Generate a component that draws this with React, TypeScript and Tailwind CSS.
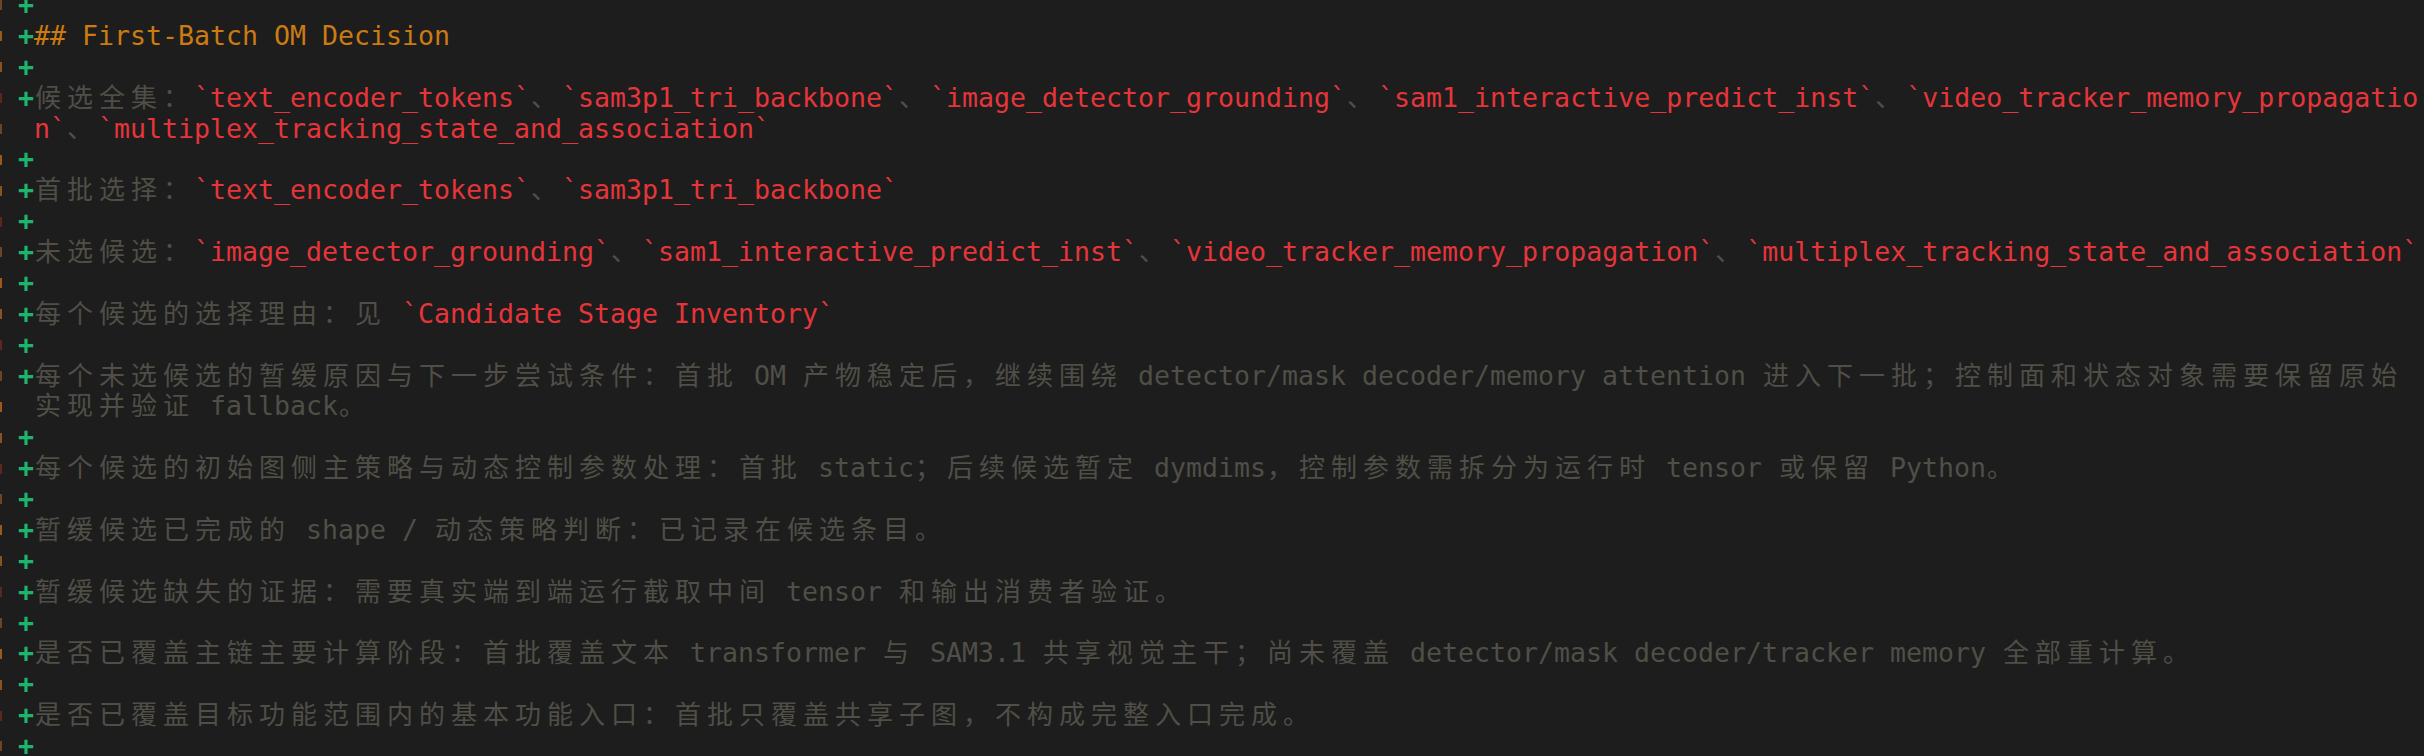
import React from "react";

type Seg = { t: string; c: "g" | "r" | "o" };

const CJK = /[\u2E80-\u9FFF\uFF00-\uFFEF]/;

function Text({ text }: { text: string }) {
  const parts: React.ReactNode[] = [];
  let buf = "";
  let k = 0;
  for (const ch of Array.from(text)) {
    if (CJK.test(ch)) {
      if (buf) {
        parts.push(<span key={k++}>{buf}</span>);
        buf = "";
      }
      parts.push(
        <span
          key={k++}
          className="inline-block w-[32px] pl-[1px] leading-none text-[26px] font-['Noto_Sans_CJK_SC',sans-serif]"
        >
          {ch}
        </span>
      );
    } else {
      buf += ch;
    }
  }
  if (buf) parts.push(<span key={k++}>{buf}</span>);
  return <>{parts}</>;
}

const colorCls: Record<Seg["c"], string> = {
  g: "text-[#4f4f47]",
  r: "text-[#e5353a]",
  o: "text-[#cc7a12]",
};

type Row = { plus: boolean; segs: Seg[]; mark: string };

const g = (t: string): Seg => ({ t, c: "g" });
const r = (t: string): Seg => ({ t, c: "r" });
const o = (t: string): Seg => ({ t, c: "o" });

const marks = ["#6e4422", "#9a5a1c", "#8a521e", "#5e2620"];

const rowsData: { plus: boolean; segs: Seg[] }[] = [
  { plus: true, segs: [] },
  { plus: true, segs: [o("## First-Batch OM Decision")] },
  { plus: true, segs: [] },
  {
    plus: true,
    segs: [
      g("候选全集："),
      r("`text_encoder_tokens`"),
      g("、"),
      r("`sam3p1_tri_backbone`"),
      g("、"),
      r("`image_detector_grounding`"),
      g("、"),
      r("`sam1_interactive_predict_inst`"),
      g("、"),
      r("`video_tracker_memory_propagatio"),
    ],
  },
  {
    plus: false,
    segs: [r("n`"), g("、"), r("`multiplex_tracking_state_and_association`")],
  },
  { plus: true, segs: [] },
  {
    plus: true,
    segs: [g("首批选择："), r("`text_encoder_tokens`"), g("、"), r("`sam3p1_tri_backbone`")],
  },
  { plus: true, segs: [] },
  {
    plus: true,
    segs: [
      g("未选候选："),
      r("`image_detector_grounding`"),
      g("、"),
      r("`sam1_interactive_predict_inst`"),
      g("、"),
      r("`video_tracker_memory_propagation`"),
      g("、"),
      r("`multiplex_tracking_state_and_association`"),
    ],
  },
  { plus: true, segs: [] },
  { plus: true, segs: [g("每个候选的选择理由：见 "), r("`Candidate Stage Inventory`")] },
  { plus: true, segs: [] },
  {
    plus: true,
    segs: [
      g(
        "每个未选候选的暂缓原因与下一步尝试条件：首批 OM 产物稳定后，继续围绕 detector/mask decoder/memory attention 进入下一批；控制面和状态对象需要保留原始"
      ),
    ],
  },
  { plus: false, segs: [g("实现并验证 fallback。")] },
  { plus: true, segs: [] },
  {
    plus: true,
    segs: [
      g(
        "每个候选的初始图侧主策略与动态控制参数处理：首批 static；后续候选暂定 dymdims，控制参数需拆分为运行时 tensor 或保留 Python。"
      ),
    ],
  },
  { plus: true, segs: [] },
  { plus: true, segs: [g("暂缓候选已完成的 shape / 动态策略判断：已记录在候选条目。")] },
  { plus: true, segs: [] },
  {
    plus: true,
    segs: [g("暂缓候选缺失的证据：需要真实端到端运行截取中间 tensor 和输出消费者验证。")],
  },
  { plus: true, segs: [] },
  {
    plus: true,
    segs: [
      g(
        "是否已覆盖主链主要计算阶段：首批覆盖文本 transformer 与 SAM3.1 共享视觉主干；尚未覆盖 detector/mask decoder/tracker memory 全部重计算。"
      ),
    ],
  },
  { plus: true, segs: [] },
  {
    plus: true,
    segs: [g("是否已覆盖目标功能范围内的基本功能入口：首批只覆盖共享子图，不构成完整入口完成。")],
  },
  { plus: true, segs: [] },
];

const rows: Row[] = rowsData.map((d, i) => ({ ...d, mark: marks[i % marks.length] }));

export default function App() {
  return (
    <div className="w-[2424px] h-[756px] overflow-hidden bg-[#1d1d1d] font-['DejaVu_Sans_Mono',monospace] text-[26.58px]">
      <div className="mt-[-10px] flex flex-col">
        {rows.map((row, i) => (
          <div key={i} className="flex h-[30.875px] leading-[30.875px] whitespace-pre">
            <div className="w-[18px] shrink-0 flex items-center">
              <div className="w-[2px] h-[10px]" style={{ backgroundColor: row.mark }} />
            </div>
            <span className="w-[16px] shrink-0 font-bold text-[#1db56e]">{row.plus ? "+" : " "}</span>
            <div className="whitespace-pre">
              {row.segs.map((s, j) => (
                <span key={j} className={colorCls[s.c]}>
                  <Text text={s.t} />
                </span>
              ))}
            </div>
          </div>
        ))}
      </div>
    </div>
  );
}
